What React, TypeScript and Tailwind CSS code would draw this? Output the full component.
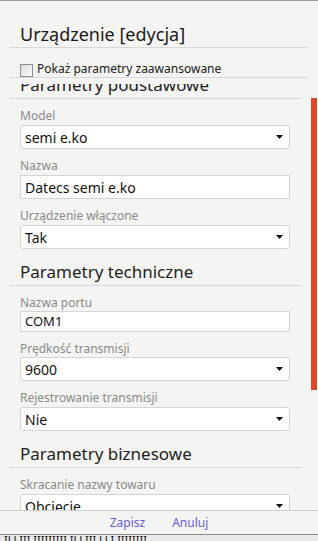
import React from "react";

const font = { fontFamily: '"Noto Sans", "Open Sans", sans-serif' };

function Arrow() {
  return (
    <svg width="7" height="4" viewBox="0 0 7 4" className="absolute right-[6px] top-1/2 -translate-y-1/2">
      <path d="M0 0 H7 L3.5 4 Z" fill="#111" />
    </svg>
  );
}

function Select({ value, h = "h-[24px]" }: { value: string; h?: string }) {
  return (
    <div className={`relative ${h} bg-white border border-[#d4d4d4] rounded-[3px] flex items-center pl-[4px] text-[14px] text-[#111]`}>
      <span>{value}</span>
      <Arrow />
    </div>
  );
}

function Input({ value, h = "h-[24px]", size = "text-[14px]" }: { value: string; h?: string; size?: string }) {
  return (
    <div className={`${h} bg-white border border-[#d4d4d4] flex items-center pl-[4px] ${size} text-[#111]`}>
      <span>{value}</span>
    </div>
  );
}

function Label({ text, mt = "mt-[10px]" }: { text: string; mt?: string }) {
  return <div className={`${mt} h-[14px] leading-[14px] text-[12px] text-[#8a8a8a] whitespace-nowrap`}>{text}</div>;
}

function Heading({ text, mt }: { text: string; mt: string }) {
  return (
    <div className={`${mt} border-b border-[#d8d8d8] pb-[1px]`}>
      <div className="pl-[10px] leading-[24px] text-[17px] text-[#1e1e1e] whitespace-nowrap">{text}</div>
    </div>
  );
}

export default function App() {
  return (
    <div style={font} className="w-[318px] h-[541px] bg-[#f4f4f2] flex flex-col overflow-hidden">
      <div className="h-[1px] bg-[#a49d92]" />
      {/* title */}
      <div className="mx-[10px] pt-[21px] pb-[1px] border-b border-[#d8d8d8]">
        <div className="pl-[10px] leading-[24px] text-[18px] text-[#1a1a1a] whitespace-nowrap">Urządzenie [edycja]</div>
      </div>
      {/* checkbox row */}
      <div className="mx-[10px] pt-[14px] pb-[1px] border-b border-[#d8d8d8]">
        <div className="pl-[10px] flex items-end gap-[4px] h-[14px]">
          <div className="w-[13px] h-[13px] border border-[#8e8f8f] bg-gradient-to-br from-[#dcdcdc] to-[#fbfbfb] mb-[-1px]" />
          <span className="text-[12px] leading-[14px] text-[#1a1a1a] whitespace-nowrap">Pokaż parametry zaawansowane</span>
        </div>
      </div>
      <div className="h-[6px]" />
      {/* scroll area */}
      <div className="relative flex-1 overflow-hidden">
        <div className="-mt-[11px] pl-[10px] pr-[17px]">
          <Heading text="Parametry podstawowe" mt="mt-0" />
          <div className="pl-[10px] pr-[11px]">
            <Label text="Model" />
            <div className="mt-[2px]"><Select value="semi e.ko" /></div>
            <Label text="Nazwa" />
            <div className="mt-[2px]"><Input value="Datecs semi e.ko" /></div>
            <Label text="Urządzenie włączone" />
            <div className="mt-[2px]"><Select value="Tak" /></div>
          </div>
          <Heading text="Parametry techniczne" mt="mt-[11px]" />
          <div className="pl-[10px] pr-[11px]">
            <Label text="Nazwa portu" />
            <div className="mt-[1px]"><Input value="COM1" h="h-[21px]" size="text-[13px]" /></div>
            <Label text="Prędkość transmisji" />
            <div className="mt-[1px]"><Select value="9600" /></div>
            <Label text="Rejestrowanie transmisji" />
            <div className="mt-[2px]"><Select value="Nie" /></div>
          </div>
          <Heading text="Parametry biznesowe" mt="mt-[11px]" />
          <div className="pl-[10px] pr-[11px]">
            <Label text="Skracanie nazwy towaru" />
            <div className="mt-[2px]"><Select value="Obcięcie" /></div>
          </div>
        </div>
        <div className="absolute right-[1px] top-[14px] w-[6px] h-[292px] bg-[#d84a2a]" />
      </div>
      {/* footer */}
      <div className="border-t border-[#cfcfcf] h-[24px] flex items-center justify-center gap-[27px] text-[12px] text-[#6b5fcf]">
        <span>Zapisz</span>
        <span>Anuluj</span>
      </div>
      <div className="h-[7px] bg-[#e9e9e9] overflow-hidden border-t border-[#8c8c8c]">
        <div className="pl-[4px] h-[6px] overflow-hidden text-[11px] leading-[14px] text-[#111] whitespace-nowrap">
          <span className="relative top-[-2px]">ILLIII IIIIIIIII ILLIII LLI IIIIIIII</span>
        </div>
      </div>
    </div>
  );
}
